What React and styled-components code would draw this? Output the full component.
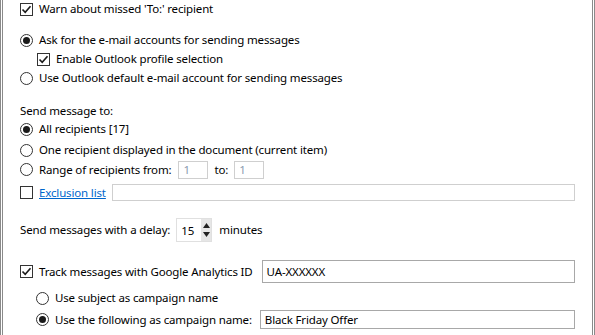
import styled, { createGlobalStyle } from "styled-components";

const GlobalStyle = createGlobalStyle`
  html, body {
    margin: 0;
    padding: 0;
    background: #fff;
  }
  body {
    font-family: "Segoe UI", "Noto Sans", "Liberation Sans", sans-serif;
    font-size: 11.5px;
    letter-spacing: -0.15px;
    color: #000;
  }
`;

const Panel = styled.div`
  width: 595px;
  height: 335px;
  box-sizing: border-box;
  background: #fff;
  border-left: 3px double #8a8a8a;
  border-right: 3px double #8a8a8a;
  padding-left: 17px;
  padding-right: 17px;
  display: flex;
  flex-direction: column;
  overflow: hidden;
`;

const Row = styled.div`
  display: flex;
  align-items: center;
  height: ${(p) => p.$h || 18}px;
  margin-top: ${(p) => p.$mt || 0}px;
  padding-left: ${(p) => p.$indent || 0}px;
  white-space: nowrap;
`;

const Label = styled.span`
  margin-left: ${(p) => p.$ml || 0}px;
  margin-right: ${(p) => p.$mr || 0}px;
  line-height: 16px;
`;

const Box = styled.span`
  width: 13px;
  height: 13px;
  box-sizing: border-box;
  border: 1px solid #333;
  background: #fff;
  flex-shrink: 0;
  display: flex;
  align-items: center;
  justify-content: center;
  margin-right: 6px;
`;

const Radio = styled.span`
  width: 13px;
  height: 13px;
  box-sizing: border-box;
  border: 1px solid #333;
  border-radius: 50%;
  background: #fff;
  flex-shrink: 0;
  display: flex;
  align-items: center;
  justify-content: center;
  margin-right: 6px;

  &::after {
    content: "";
    display: ${(p) => (p.$on ? "block" : "none")};
    width: 7px;
    height: 7px;
    border-radius: 50%;
    background: #1a1a1a;
  }
`;

const Field = styled.div`
  box-sizing: border-box;
  height: ${(p) => p.$h || 18}px;
  width: ${(p) => (p.$w ? `${p.$w}px` : "auto")};
  flex: ${(p) => (p.$grow ? 1 : "none")};
  border: 1px solid ${(p) => (p.$dark ? "#a8a8a8" : "#cfcfcf")};
  background: #fff;
  color: ${(p) => (p.$muted ? "#8a9ab0" : "#000")};
  padding-left: 4px;
  display: flex;
  align-items: center;
  margin-left: ${(p) => p.$ml || 0}px;
  margin-right: ${(p) => p.$mr || 0}px;
`;

const LinkText = styled.a`
  color: #0066cc;
  text-decoration: underline;
  margin-right: 6px;
`;

const Spinner = styled.div`
  display: flex;
  height: 24px;
  width: 36px;
  box-sizing: border-box;
  border: 1px solid #e0e0e0;
  margin-left: 6px;
  margin-right: 7px;
`;

const SpinValue = styled.div`
  flex: 1;
  display: flex;
  align-items: center;
  padding-left: 4px;
`;

const SpinArrows = styled.div`
  width: 10px;
  background: #e6e6e6;
  display: flex;
  flex-direction: column;
  align-items: center;
  justify-content: space-around;
  padding: 2px 0;
`;

function Check() {
  return (
    <Box>
      <svg width="11" height="11" viewBox="0 0 11 11">
        <path d="M1.5 5.5 L4.2 8.3 L9.5 2.2" fill="none" stroke="#1a1a1a" strokeWidth="1.6" />
      </svg>
    </Box>
  );
}

function Arrow({ up }) {
  return (
    <svg width="7" height="5" viewBox="0 0 7 5">
      <path d={up ? "M0 5 L3.5 0 L7 5 Z" : "M0 0 L3.5 5 L7 0 Z"} fill="#222" />
    </svg>
  );
}

export default function App() {
  return (
    <>
      <GlobalStyle />
      <Panel>
        <Row>
          <Check />
          <Label>Warn about missed 'To:' recipient</Label>
        </Row>

        <Row $mt={13}>
          <Radio $on />
          <Label>Ask for the e-mail accounts for sending messages</Label>
        </Row>
        <Row $mt={1} $indent={17}>
          <Check />
          <Label>Enable Outlook profile selection</Label>
        </Row>
        <Row $mt={1}>
          <Radio />
          <Label>Use Outlook default e-mail account for sending messages</Label>
        </Row>

        <Row $mt={15}>
          <Label>Send message to:</Label>
        </Row>
        <Row>
          <Radio $on />
          <Label>All recipients [17]</Label>
        </Row>
        <Row $mt={3}>
          <Radio />
          <Label>One recipient displayed in the document (current item)</Label>
        </Row>
        <Row $mt={1} $h={19}>
          <Radio />
          <Label $mr={7}>Range of recipients from:</Label>
          <Field $w={30} $muted>1</Field>
          <Label $ml={6} $mr={6}>to:</Label>
          <Field $w={30} $muted>1</Field>
        </Row>
        <Row $mt={4} $h={18}>
          <Box />
          <LinkText>Exclusion list</LinkText>
          <Field $grow $h={17} />
        </Row>

        <Row $mt={17} $h={24}>
          <Label>Send messages with a delay:</Label>
          <Spinner>
            <SpinValue>15</SpinValue>
            <SpinArrows>
              <Arrow up />
              <Arrow />
            </SpinArrows>
          </Spinner>
          <Label>minutes</Label>
        </Row>

        <Row $mt={18} $h={23}>
          <Check />
          <Label $mr={9}>Track messages with Google Analytics ID</Label>
          <Field $grow $dark $h={23}>UA-XXXXXX</Field>
        </Row>
        <Row $mt={6} $indent={16}>
          <Radio />
          <Label>Use subject as campaign name</Label>
        </Row>
        <Row $mt={3} $h={19} $indent={16}>
          <Radio $on />
          <Label $mr={8}>Use the following as campaign name:</Label>
          <Field $grow $dark $h={19}>Black Friday Offer</Field>
        </Row>
      </Panel>
    </>
  );
}
